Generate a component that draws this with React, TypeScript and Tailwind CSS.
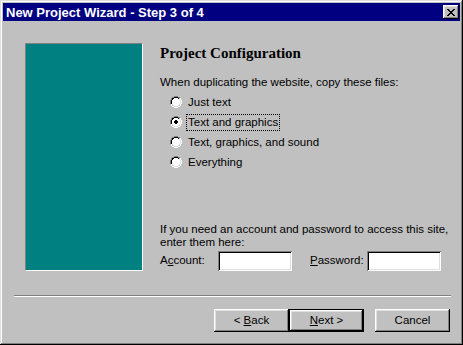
import React from 'react';

const font = { fontFamily: '"Liberation Sans", Arial, sans-serif' };

function Radio({ checked }: { checked?: boolean }) {
  return (
    <svg width="12" height="12" viewBox="0 0 12 12" shapeRendering="crispEdges" className="shrink-0">
      <path d="M4 0h4v1H4zM2 1h2v1H2zM8 1h2v1H8zM1 2h1v2H1zM0 4h1v4H0z" fill="#808080" />
      <path d="M4 1h4v1H4zM2 2h2v1H2zM8 2h1v1H8zM2 3h1v1H2zM1 4h1v4H1z" fill="#000" />
      <path d="M4 2h4v1H4zM3 3h6v1H3zM2 4h8v4H2zM3 8h6v1H3zM4 9h4v1H4z" fill="#fff" />
      <path d="M9 3h1v1H9zM2 8h1v1H2zM9 8h1v1H9zM3 9h1v1H3zM8 9h1v1H8z" fill="#dfdfdf" />
      <path d="M10 2h1v2h-1zM11 4h1v4h-1zM10 8h1v2h-1zM8 10h2v1H8zM2 10h2v1H2zM4 11h4v1H4zM1 8h1v2H1z" fill="#fff" />
      <path d="M10 4h1v4h-1zM4 10h4v1H4z" fill="#dfdfdf" />
      {checked && <path d="M5 4h2v1H5zM4 5h4v2H4zM5 7h2v1H5z" fill="#000" />}
    </svg>
  );
}

function Button({ children, isDefault }: { children: React.ReactNode; isDefault?: boolean }) {
  const raised = 'shadow-[inset_-1px_-1px_#000,inset_1px_1px_#fff,inset_-2px_-2px_#808080,inset_2px_2px_#dfdfdf]';
  return (
    <div
      className={`w-[75px] h-[23px] flex items-center justify-center text-[11.5px] text-black bg-[#c0c0c0] ${
        isDefault ? 'border border-black' : ''
      }`}
    >
      <div className={`w-full h-full flex items-center justify-center ${raised}`}>{children}</div>
    </div>
  );
}

function Field() {
  return (
    <div className="w-[74px] h-[20px] bg-white shadow-[inset_1px_1px_#808080,inset_-1px_-1px_#fff,inset_2px_2px_#000,inset_-2px_-2px_#dfdfdf]" />
  );
}

export default function App() {
  const options = ['Just text', 'Text and graphics', 'Text, graphics, and sound', 'Everything'];

  return (
    <div
      style={font}
      className="w-[463px] h-[345px] bg-[#c0c0c0] p-[3px] flex flex-col text-black select-none shadow-[inset_-1px_-1px_#000,inset_1px_1px_#dfdfdf,inset_-2px_-2px_#808080,inset_2px_2px_#fff]"
    >
      <div className="h-[18px] bg-[#000080] flex items-center justify-between pl-[3px] pr-[1px]">
        <span className="text-white font-bold text-[13px] leading-none">New Project Wizard - Step 3 of 4</span>
        <div className="w-[16px] h-[14px] bg-[#c0c0c0] flex items-center justify-center shadow-[inset_-1px_-1px_#000,inset_1px_1px_#fff,inset_-2px_-2px_#808080,inset_2px_2px_#dfdfdf]">
          <svg width="8" height="7" viewBox="0 0 8 7" shapeRendering="crispEdges">
            <path d="M0 0h2v1H0zM6 0h2v1H6zM1 1h2v1H1zM5 1h2v1H5zM2 2h4v1H2zM3 3h2v1H3zM2 4h4v1H2zM1 5h2v1H1zM5 5h2v1H5zM0 6h2v1H0zM6 6h2v1H6z" fill="#000" />
          </svg>
        </div>
      </div>

      <div className="flex pt-[22px] pl-[22px]">
        <div className="w-[118px] h-[228px] bg-[#008080] border border-t-[#808080] border-l-[#808080] border-b-white border-r-white" />
        <div className="ml-[17px] flex flex-col h-[228px] text-[11.5px]">
          <h1
            className="text-[15px] leading-[20px] font-bold"
            style={{ fontFamily: '"Liberation Serif", "Times New Roman", serif' }}
          >
            Project Configuration
          </h1>
          <p className="mt-[13px] leading-[13px] whitespace-nowrap">
            When duplicating the website, copy these files:
          </p>
          <div className="mt-[3px] ml-[10px] flex flex-col">
            {options.map((o, i) => (
              <div key={o} className="h-[20px] flex items-center">
                <Radio checked={i === 1} />
                <span
                  className={`ml-[4px] leading-[13px] px-[1px] py-[1px] whitespace-nowrap ${
                    i === 1 ? 'border border-dotted border-black' : 'border border-transparent'
                  }`}
                >
                  {o}
                </span>
              </div>
            ))}
          </div>
          <div className="mt-auto flex flex-col">
            <p className="leading-[13px] whitespace-nowrap">
              If you need an account and password to access this site,
            </p>
            <p className="leading-[13px] whitespace-nowrap">enter them here:</p>
            <div className="mt-[2px] flex items-center">
              <span className="w-[58px]">
                A<span className="underline">c</span>count:
              </span>
              <Field />
              <span className="ml-[18px] w-[57px]">
                <span className="underline">P</span>assword:
              </span>
              <Field />
            </div>
          </div>
        </div>
      </div>

      <div className="mt-[24px] ml-[11px] mr-[9px] h-[2px] border-t border-t-[#808080] border-b border-b-white" />

      <div className="mt-[12px] pr-[10px] flex justify-end">
        <Button>
          &lt; <span className="underline ml-[3px]">B</span>ack
        </Button>
        <Button isDefault>
          <span className="underline">N</span>ext &gt;
        </Button>
        <div className="w-[11px]" />
        <Button>Cancel</Button>
      </div>
    </div>
  );
}
